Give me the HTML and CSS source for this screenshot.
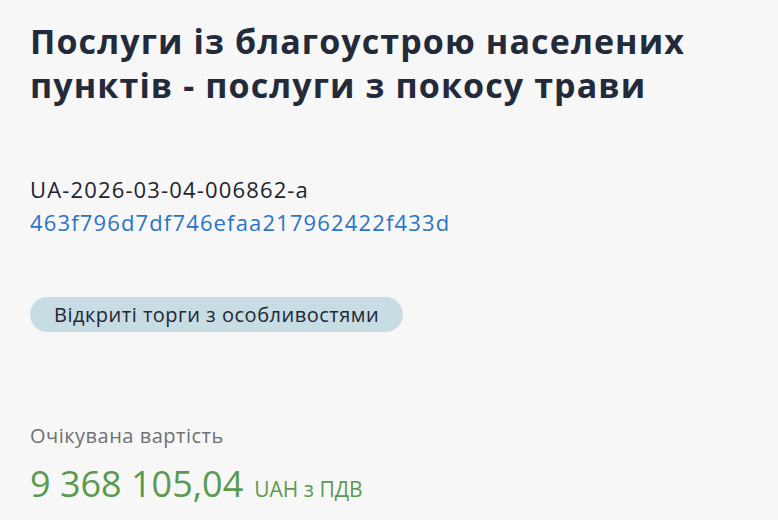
FILE: index.html
```html
<!DOCTYPE html>
<html lang="uk">
<head>
<meta charset="utf-8">
<link rel="stylesheet" href="styles.css">
</head>
<body>
<main class="page">
  <h1 class="title">Послуги із благоустрою населених пунктів - послуги з покосу трави</h1>
  <div class="ids">
    <div class="tender-id">UA-2026-03-04-006862-a</div>
    <a class="hash" href="#">463f796d7df746efaa217962422f433d</a>
  </div>
  <div class="badge-row"><span class="badge">Відкриті торги з особливостями</span></div>
  <div class="value">
    <div class="value-label">Очікувана вартість</div>
    <div class="value-amount"><span class="amount">9 368 105,04</span><span class="currency">UAH з ПДВ</span></div>
  </div>
</main>
</body>
</html>
```
FILE: styles.css
```css
html, body {
  margin: 0;
  padding: 0;
  background: #f7f7f7;
}
body {
  font-family: "Open Sans", "Noto Sans", sans-serif;
  color: #1f2532;
}
.page {
  padding: 19px 30px 0 30px;
  display: flex;
  flex-direction: column;
}
.title {
  margin: 0;
  font-size: 34px;
  line-height: 44px;
  font-weight: 700;
  letter-spacing: 1.1px;
  color: #232a39;
  max-width: 710px;
}
.ids {
  margin-top: 66px;
  display: flex;
  flex-direction: column;
  font-size: 22px;
  line-height: 33px;
  letter-spacing: 1.15px;
}
.tender-id {
  color: #1d2330;
}
.hash {
  color: #2b74c6;
  text-decoration: none;
}
.badge-row {
  margin-top: 58px;
  display: flex;
}
.badge {
  background: #c8dce3;
  border-radius: 18px;
  padding: 0 24px;
  height: 35px;
  line-height: 35px;
  font-size: 20px;
  letter-spacing: 0.5px;
  color: #202836;
}
.value {
  margin-top: 90px;
}
.value-label {
  font-size: 20px;
  line-height: 28px;
  letter-spacing: 0.5px;
  color: #6e7175;
}
.value-amount {
  display: flex;
  align-items: baseline;
  gap: 11px;
  color: #5b9a4f;
  line-height: 48px;
  margin-top: 10px;
}
.amount {
  font-size: 36px;
}
.currency {
  font-size: 21px;
}
```
